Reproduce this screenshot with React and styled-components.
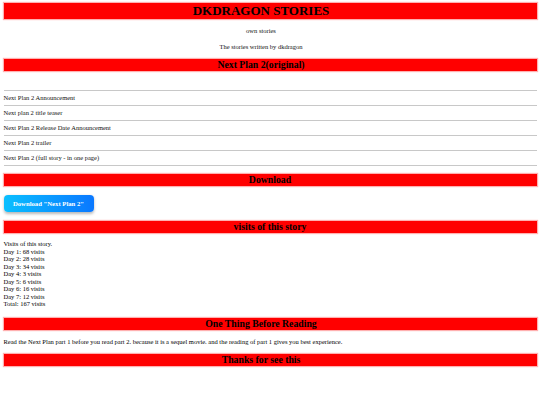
import React from 'react';
import styled, { createGlobalStyle } from 'styled-components';

const GlobalStyle = createGlobalStyle`
  html, body {
    margin: 0;
    padding: 0;
    background: #ffffff;
  }
  body {
    font-family: "Liberation Serif", "Times New Roman", serif;
    color: #000;
  }
`;

const StoriesPage = () => {
  const chapters = [
    "Next Plan 2 Announcement",
    "Next plan 2 title teaser",
    "Next Plan 2 Release Date Announcement",
    "Next Plan 2 trailer",
    "Next Plan 2 (full story - in one page)"
  ];

  const visits = [
    "Visits of this story.",
    "Day 1: 68 visits",
    "Day 2: 28 visits",
    "Day 3: 34 visits",
    "Day 4: 3 visits",
    "Day 5: 6 visits",
    "Day 6: 16 visits",
    "Day 7: 12 visits",
    "Total: 167 visits"
  ];

  return (
    <Page>
      <GlobalStyle />
      <Banner>DKDRAGON STORIES</Banner>
      <Tagline>own stories</Tagline>
      <Tagline>The stories written by dkdragon</Tagline>

      <SectionBar $offset>Next Plan 2(original)</SectionBar>
      <ChapterList>
        {chapters.map((chapter, i) => (
          <li key={i}>{chapter}</li>
        ))}
      </ChapterList>

      <SectionBar>Download</SectionBar>
      <DownloadButton>Download "Next Plan 2"</DownloadButton>

      <SectionBar>visits of this story</SectionBar>
      <VisitStats>
        {visits.map((line, i) => (
          <div key={i}>{line}</div>
        ))}
      </VisitStats>

      <SectionBar $offset>One Thing Before Reading</SectionBar>
      <Note>
        Read the Next Plan part 1 before you read part 2. because it is a sequel movie. and the reading of part 1 gives you best experience.
      </Note>

      <SectionBar $offset>Thanks for see this</SectionBar>
    </Page>
  );
};

// Styled Components
const Page = styled.div`
  padding: 3px 3.5px;
  display: flex;
  flex-direction: column;
  font-family: "Liberation Serif", "Times New Roman", serif;
`;

const Banner = styled.h1`
  margin: 0;
  height: 16px;
  padding-right: 18px;
  line-height: 16px;
  font-family: "Liberation Serif", "Times New Roman", serif;
  font-size: 13px;
  font-weight: bold;
  text-align: center;
  color: #000;
  background: #ff0000;
  box-shadow: 0 0 1px 1px rgba(255, 80, 80, 0.45);
`;

const Tagline = styled.p`
  margin: 8px 0 0;
  padding-right: 18px;
  font-size: 6.5px;
  line-height: 7.5px;
  text-align: center;
  color: #111;
`;

const SectionBar = styled.h2`
  margin: 8.5px 0 0;
  height: 12px;
  padding-right: ${props => (props.$offset ? '18px' : '0')};
  line-height: 12px;
  font-family: "Liberation Serif", "Times New Roman", serif;
  font-size: 9.75px;
  font-weight: bold;
  text-align: center;
  color: #000;
  background: #ff0000;
  box-shadow: 0 0 1px 1px rgba(255, 80, 80, 0.45);
`;

const ChapterList = styled.ul`
  list-style: none;
  margin: 19px 0 0;
  padding: 0;
  border-top: 1px solid #c8c8c8;

  li {
    height: 14px;
    line-height: 14px;
    font-size: 6.5px;
    color: #111;
    border-bottom: 1px solid #c8c8c8;
  }
`;

const DownloadButton = styled.button`
  align-self: flex-start;
  margin-top: 9px;
  width: 90px;
  height: 17px;
  padding: 0;
  border: none;
  border-radius: 4px;
  background: linear-gradient(90deg, #0abfff, #0a78ff);
  box-shadow: 0 1.5px 3px rgba(0, 0, 0, 0.28);
  color: #ffffff;
  font-family: "Liberation Serif", "Times New Roman", serif;
  font-size: 6.7px;
  font-weight: bold;
  cursor: pointer;
`;

const VisitStats = styled.div`
  margin-top: 7.5px;
  margin-bottom: 2px;
  font-size: 6.5px;
  line-height: 7.55px;
  color: #000;
`;

const Note = styled.p`
  margin: 7.5px 0 0;
  font-size: 6.5px;
  line-height: 7.5px;
  color: #000;
`;

export default StoriesPage;
